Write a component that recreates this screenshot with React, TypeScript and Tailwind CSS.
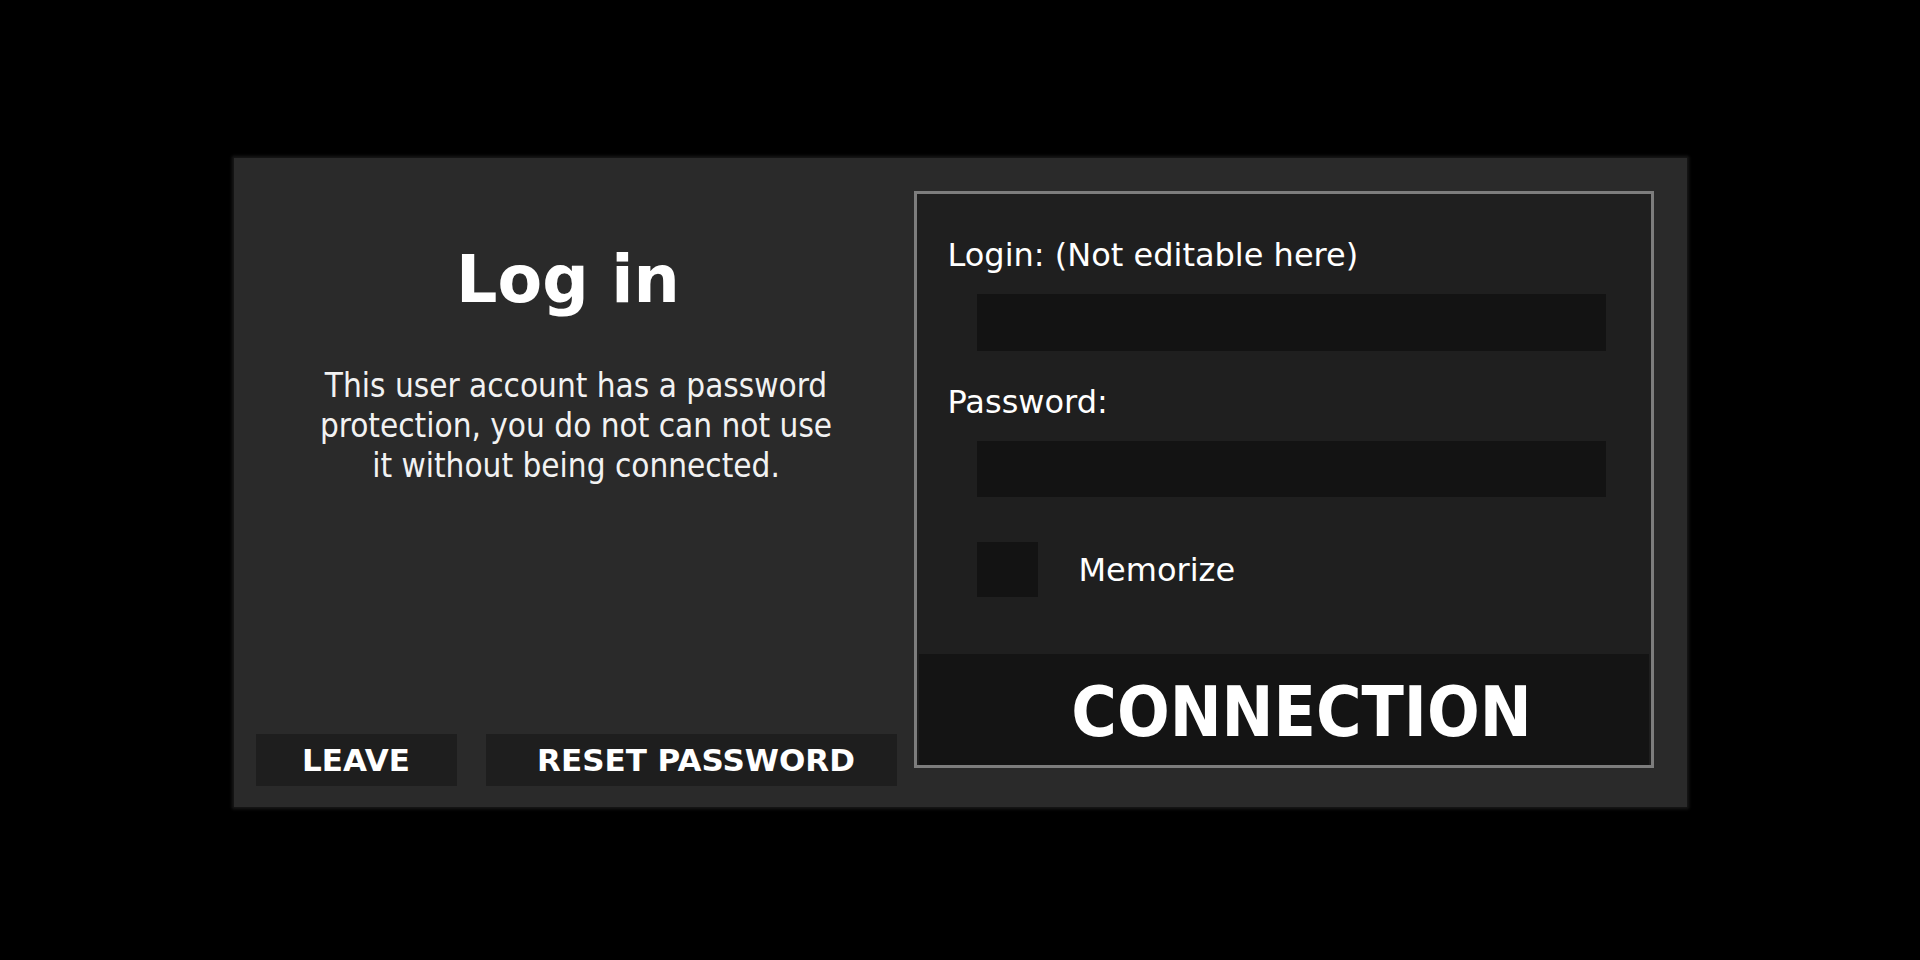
import React from "react";

const cond = "font-['DejaVu_Sans_Condensed','DejaVu_Sans',sans-serif]";
const reg = "font-['DejaVu_Sans',sans-serif]";

export default function App() {
  return (
    <div className="w-full h-screen bg-black flex justify-center pt-[158px]">
      <div className="w-[1453px] h-[649px] bg-[#2a2a2a] flex pl-[22px] pr-[33px] pt-[33px] pb-[21px] shadow-[0_0_3px_2px_rgba(42,42,42,0.6)]">
        {/* Left column */}
        <div className="w-[641px] flex flex-col items-center text-white">
          <h1 className={`${reg} mt-[57px] pr-[16px] text-[65px] leading-[64px] font-bold`}>Log in</h1>
          <p className={`${cond} mt-[54px] text-[33px] leading-[40px] text-center text-[#f2f2f2]`}>
            This user account has a password
            <br />
            protection, you do not can not use
            <br />
            it without being connected.
          </p>
          <div className="mt-auto w-full flex gap-[29px]">
            <button className={`${reg} w-[201px] h-[52px] bg-[#1e1e1e] text-white text-[31px] font-bold flex items-center justify-center`}>
              LEAVE
            </button>
            <button className={`${reg} w-[411px] h-[52px] bg-[#1e1e1e] text-white text-[31px] font-bold flex items-center justify-center pl-[10px]`}>
              RESET PASSWORD
            </button>
          </div>
        </div>
        {/* Right box */}
        <div className="ml-[17px] w-[740px] h-[577px] border-[3px] border-[#7d7d7d] bg-[#1f1f1f] flex flex-col text-white">
          <div className="pl-[31px] pr-[45px] pt-[41px] flex flex-col">
            <label className={`${reg} text-[32px] leading-[40px]`}>Login: (Not editable here)</label>
            <div className="ml-[29px] mt-[19px] h-[57px] bg-[#131313]" />
            <label className={`${reg} mt-[31px] text-[32px] leading-[40px]`}>Password:</label>
            <div className="ml-[29px] mt-[19px] h-[56px] bg-[#131313]" />
            <div className="ml-[29px] mt-[45px] flex items-center">
              <div className="w-[61px] h-[55px] bg-[#131313]" />
              <span className={`${reg} ml-[41px] text-[32px] leading-[40px]`}>Memorize</span>
            </div>
          </div>
          <div className="mt-auto mx-[2px] h-[111px] bg-[#141414] flex items-center justify-center pl-[36px] pt-[4px]">
            <span className={`${cond} text-[69px] leading-[70px] font-bold`}>CONNECTION</span>
          </div>
        </div>
      </div>
    </div>
  );
}
